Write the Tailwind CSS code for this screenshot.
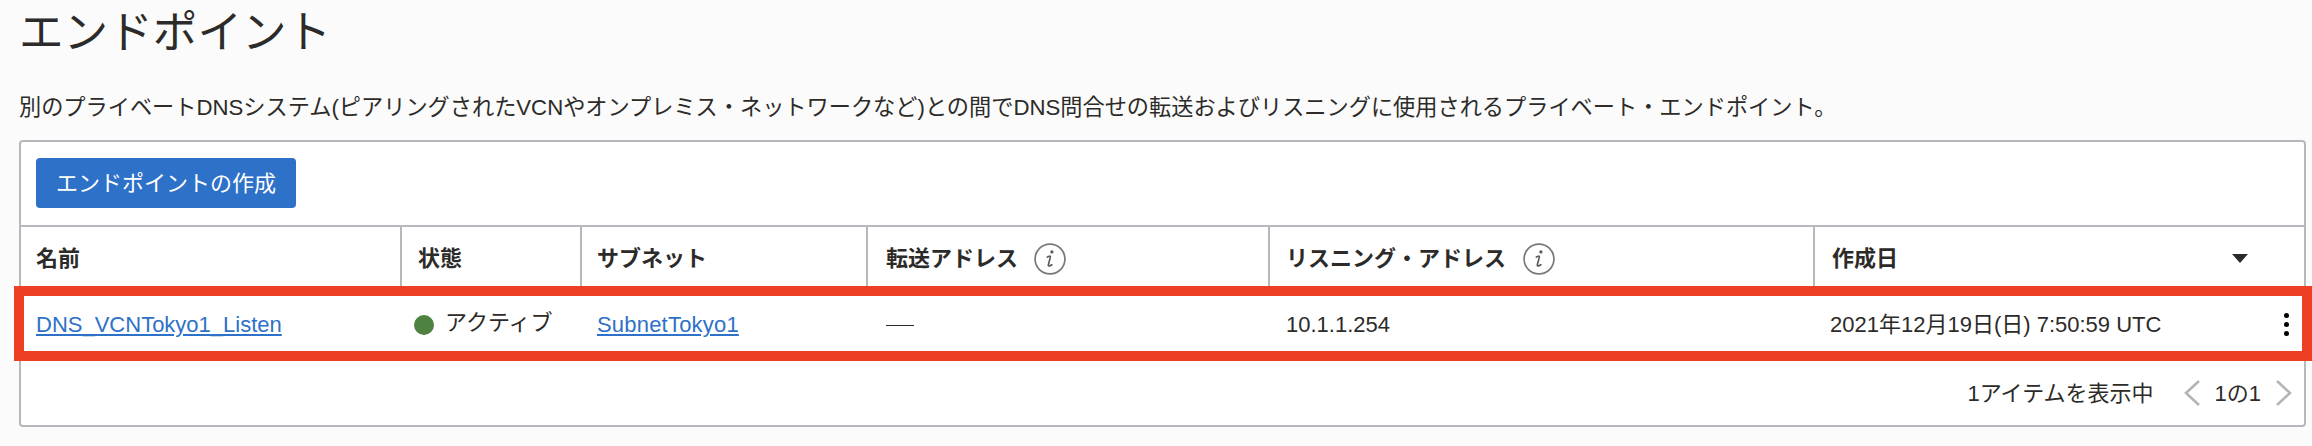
<!DOCTYPE html>
<html lang="ja">
    <head>
        <meta charset="UTF-8">
        <title>エンドポイント</title>
        <script src="https://cdn.jsdelivr.net/npm/@tailwindcss/browser@4"></script>
    </head>
    <body class="bg-[#fbfbfb] h-[446px] overflow-hidden text-[#2c2b29] font-['Liberation_Sans','Noto_Sans_CJK_JP',sans-serif]">
        <div class="pl-[19px] pr-[6px]">
            <h1 class="h-[72px] text-[44.6px] leading-[66px] font-normal">エンドポイント</h1>
            <p class="h-[68px] pt-[20px] text-[22.2px] leading-[32px]">別のプライベートDNSシステム(ピアリングされたVCNやオンプレミス・ネットワークなど)との間でDNS問合せの転送およびリスニングに使用されるプライベート・エンドポイント。</p>

            <div class="relative h-[287px] border-2 border-[#b5b9be] rounded bg-white">
                <div class="h-[83px] pt-[16px] pl-[15px]">
                    <button class="w-[260px] h-[50px] bg-[#2d71c8] text-white text-[22px] rounded">エンドポイントの作成</button>
                </div>

                <div class="grid grid-cols-[379px_180px_286px_402px_545px_1fr] h-[65px] border-t-2 border-[#b5b9be] text-[22px] font-bold">
                    <div class="flex items-center pl-[15px]">名前</div>
                    <div class="flex items-center pl-[16px] border-l-2 border-[#b5b9be]">状態</div>
                    <div class="flex items-center pl-[15px] border-l-2 border-[#b5b9be]">サブネット</div>
                    <div class="flex items-center pl-[18px] border-l-2 border-[#b5b9be]">
                        転送アドレス
                        <svg class="w-[32px] h-[32px] ml-[16px] mt-[1px]" viewBox="0 0 30 30">
                            <circle cx="15" cy="15" r="14" fill="none" stroke="#77797c" stroke-width="1.6"/>
                            <circle cx="16.8" cy="8.4" r="1.5" fill="#55575a"/>
                            <path d="M12.4 13.2 Q15 11.6 15.4 13 L13.4 20.6 Q13.3 22.6 16.8 20.4" fill="none" stroke="#55575a" stroke-width="1.5" stroke-linecap="round"/>
                        </svg>
                    </div>
                    <div class="flex items-center pl-[16px] border-l-2 border-[#b5b9be]">
                        リスニング・アドレス
                        <svg class="w-[32px] h-[32px] ml-[17px] mt-[1px]" viewBox="0 0 30 30">
                            <circle cx="15" cy="15" r="14" fill="none" stroke="#77797c" stroke-width="1.6"/>
                            <circle cx="16.8" cy="8.4" r="1.5" fill="#55575a"/>
                            <path d="M12.4 13.2 Q15 11.6 15.4 13 L13.4 20.6 Q13.3 22.6 16.8 20.4" fill="none" stroke="#55575a" stroke-width="1.5" stroke-linecap="round"/>
                        </svg>
                    </div>
                    <div class="flex items-center justify-between pl-[17px] pr-[56px] border-l-2 border-[#b5b9be]">
                        作成日
                        <span class="w-0 h-0 border-x-[8px] border-x-transparent border-t-[9px] border-t-[#2c2b29]"></span>
                    </div>
                </div>

                <div class="grid grid-cols-[379px_180px_286px_402px_545px_1fr] h-[71px] border-b-2 border-[#b5b9be] text-[22px] items-center">
                    <div class="pl-[15px]"><a href="#" class="text-[#2d71c8] underline">DNS_VCNTokyo1_Listen</a></div>
                    <div class="flex items-center pl-[14px]">
                        <span class="w-[20px] h-[20px] rounded-full bg-[#4f8240] mr-[11px]"></span>
                        <span class="-mt-[4px]">アクティブ</span>
                    </div>
                    <div class="pl-[17px]"><a href="#" class="text-[#2d71c8] underline tracking-[0.2px]">SubnetTokyo1</a></div>
                    <div class="pl-[20px]"><span class="block w-[28px] h-px mt-[2px] bg-[#2c2b29]"></span></div>
                    <div class="pl-[18px]">10.1.1.254</div>
                    <div class="flex items-center justify-between pl-[17px] pr-[15px]">
                        <span>2021年12月19日(日) 7:50:59 UTC</span>
                        <span class="flex flex-col gap-[4px]">
                            <span class="w-[5px] h-[5px] rounded-full bg-black"></span>
                            <span class="w-[5px] h-[5px] rounded-full bg-black"></span>
                            <span class="w-[5px] h-[5px] rounded-full bg-black"></span>
                        </span>
                    </div>
                </div>

                <div class="flex items-center justify-end h-[64px] pr-[11px] text-[22px]">
                    <span>1アイテムを表示中</span>
                    <svg class="w-[18px] h-[28px] ml-[29px]" viewBox="0 0 18 28"><path d="M16 2 L3 14 L16 26" fill="none" stroke="#b5b5b5" stroke-width="2.6"/></svg>
                    <span class="mx-[14px]">1の1</span>
                    <svg class="w-[18px] h-[28px]" viewBox="0 0 18 28"><path d="M2 2 L15 14 L2 26" fill="none" stroke="#b5b5b5" stroke-width="2.6"/></svg>
                </div>

                <!-- red highlight drawn over the row -->
                <div class="absolute left-[-7px] right-[-8px] top-[144px] h-[75px] border-y-[10px] border-x-[10px] border-[#ee3f24]"></div>
            </div>
        </div>
    </body>
</html>
